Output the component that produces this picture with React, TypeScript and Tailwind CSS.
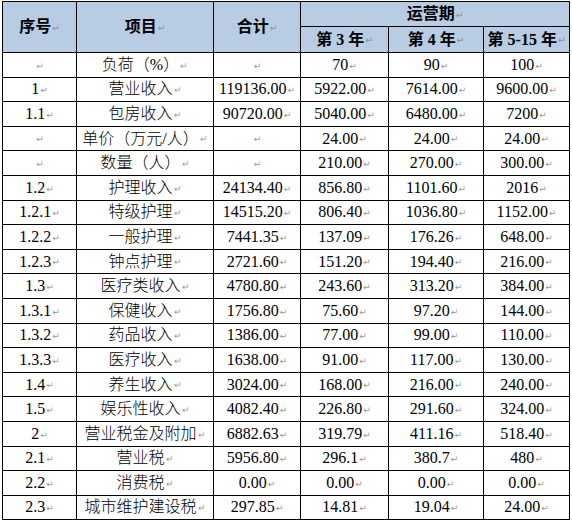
import React from "react";

const rows: string[][] = [
  ["", "负荷（%）", "", "70", "90", "100"],
  ["1", "营业收入", "119136.00", "5922.00", "7614.00", "9600.00"],
  ["1.1", "包房收入", "90720.00", "5040.00", "6480.00", "7200"],
  ["", "单价（万元/人）", "", "24.00", "24.00", "24.00"],
  ["", "数量（人）", "", "210.00", "270.00", "300.00"],
  ["1.2", "护理收入", "24134.40", "856.80", "1101.60", "2016"],
  ["1.2.1", "特级护理", "14515.20", "806.40", "1036.80", "1152.00"],
  ["1.2.2", "一般护理", "7441.35", "137.09", "176.26", "648.00"],
  ["1.2.3", "钟点护理", "2721.60", "151.20", "194.40", "216.00"],
  ["1.3", "医疗类收入", "4780.80", "243.60", "313.20", "384.00"],
  ["1.3.1", "保健收入", "1756.80", "75.60", "97.20", "144.00"],
  ["1.3.2", "药品收入", "1386.00", "77.00", "99.00", "110.00"],
  ["1.3.3", "医疗收入", "1638.00", "91.00", "117.00", "130.00"],
  ["1.4", "养生收入", "3024.00", "168.00", "216.00", "240.00"],
  ["1.5", "娱乐性收入", "4082.40", "226.80", "291.60", "324.00"],
  ["2", "营业税金及附加", "6882.63", "319.79", "411.16", "518.40"],
  ["2.1", "营业税", "5956.80", "296.1", "380.7", "480"],
  ["2.2", "消费税", "0.00", "0.00", "0.00", "0.00"],
  ["2.3", "城市维护建设税", "297.85", "14.81", "19.04", "24.00"],
];

// Word paragraph mark
const Mark = () => (
  <span className="text-[9px] text-[#9a9a9a] ml-px align-middle [font-family:'DejaVu_Sans',sans-serif]">
    ↵
  </span>
);

const serif = "[font-family:'Liberation_Serif','Noto_Sans_CJK_SC',serif]";

const App = () => {
  const th = `border border-black bg-[#b8cce4] text-center font-bold text-[16px] text-black leading-none ${serif}`;
  const td = `border border-black text-center text-[16px] text-black leading-none whitespace-nowrap ${serif}`;

  return (
    <div className="w-[572px] h-[521px] bg-white pl-[2px] pt-[1px]">
      <table className="table-fixed border-collapse w-[567px]">
        <colgroup>
          <col className="w-[74px]" />
          <col className="w-[137px]" />
          <col className="w-[87px]" />
          <col className="w-[88px]" />
          <col className="w-[95px]" />
          <col className="w-[86px]" />
        </colgroup>
        <thead>
          <tr className="h-[25px]">
            <th rowSpan={2} className={th}>
              序号
              <Mark />
            </th>
            <th rowSpan={2} className={th}>
              项目
              <Mark />
            </th>
            <th rowSpan={2} className={th}>
              合计
              <Mark />
            </th>
            <th colSpan={3} className={th}>
              运营期
              <Mark />
            </th>
          </tr>
          <tr className="h-[26px]">
            <th className={th}>
              第 3 年<Mark />
            </th>
            <th className={th}>
              第 4 年<Mark />
            </th>
            <th className={th}>
              第 5-15 年<Mark />
            </th>
          </tr>
        </thead>
        <tbody>
          {rows.map((r, i) => (
            <tr key={i} className="h-[24.6px]">
              {r.map((c, j) => (
                <td key={j} className={`${td} ${j === 1 ? "font-light" : ""}`}>
                  {c}
                  {(c !== "" || j < 3) && <Mark />}
                </td>
              ))}
            </tr>
          ))}
        </tbody>
      </table>
    </div>
  );
};

export default App;
